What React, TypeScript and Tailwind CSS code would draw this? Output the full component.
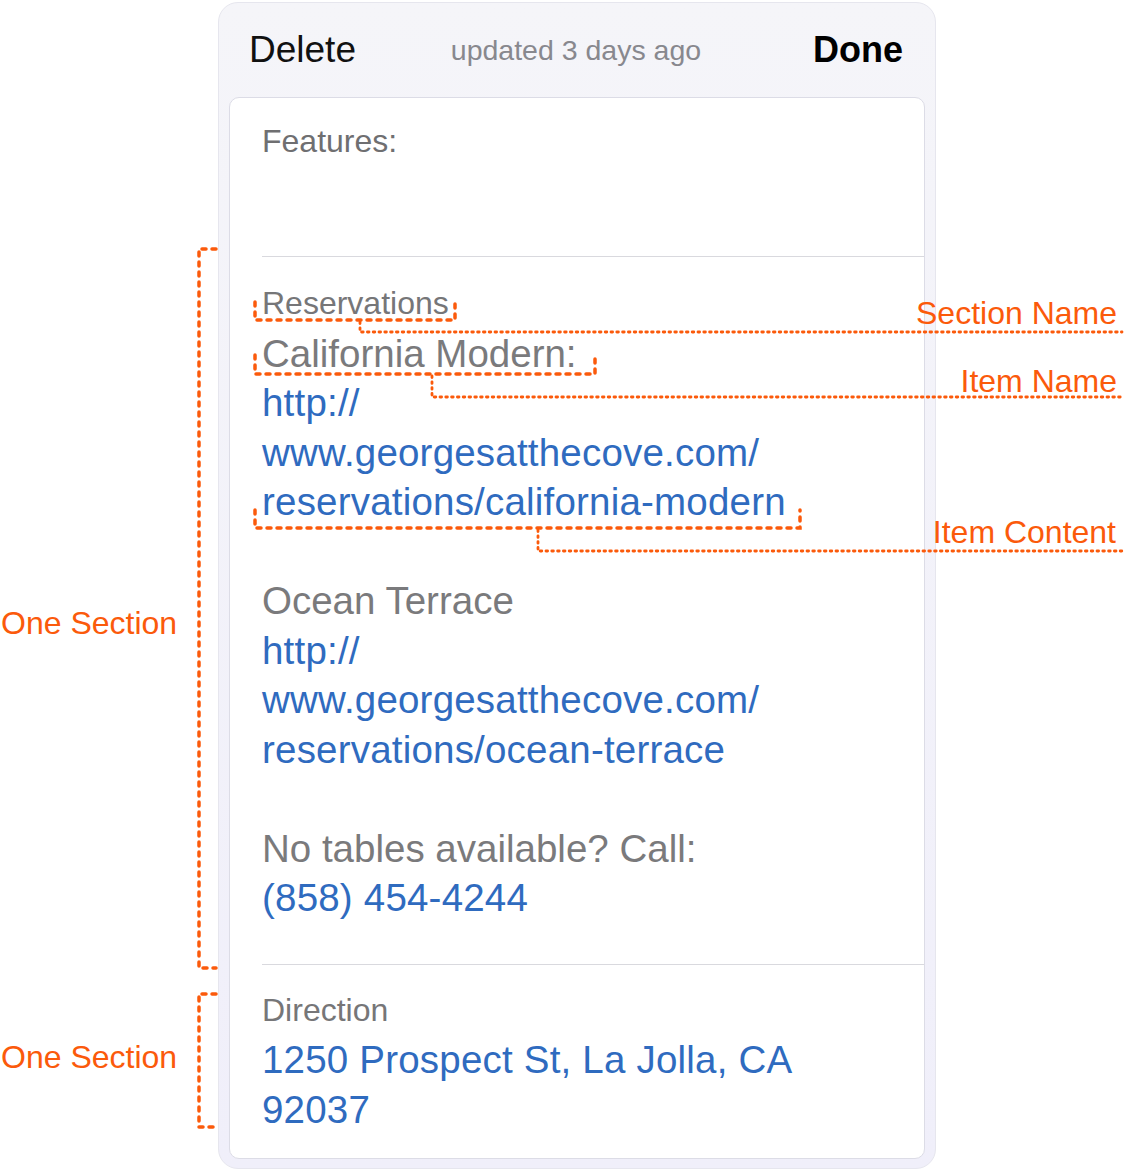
import React from "react";

const ORANGE = "#fb5a0b";

type Line = { text: string; kind: "section" | "name" | "link" | "gap" };

const reservations: Line[] = [
  { text: "Reservations", kind: "section" },
  { text: "California Modern:", kind: "name" },
  { text: "http://", kind: "link" },
  { text: "www.georgesatthecove.com/", kind: "link" },
  { text: "reservations/california-modern", kind: "link" },
  { text: "", kind: "gap" },
  { text: "Ocean Terrace", kind: "name" },
  { text: "http://", kind: "link" },
  { text: "www.georgesatthecove.com/", kind: "link" },
  { text: "reservations/ocean-terrace", kind: "link" },
  { text: "", kind: "gap" },
  { text: "No tables available? Call:", kind: "name" },
  { text: "(858) 454-4244", kind: "link" },
];

const direction: Line[] = [
  { text: "Direction", kind: "section" },
  { text: "1250 Prospect St, La Jolla, CA", kind: "link" },
  { text: "92037", kind: "link" },
];

function Row({ line }: { line: Line }) {
  if (line.kind === "gap") return <div className="h-[49.5px]" />;
  if (line.kind === "section")
    return <div className="h-[49.5px] leading-[49.5px] text-[32px] text-[#767678]">{line.text}</div>;
  if (line.kind === "name")
    return <div className="h-[49.5px] leading-[49.5px] text-[38.5px] text-[#7a7a7c]">{line.text}</div>;
  return (
    <div className="h-[49.5px] leading-[49.5px] text-[38.5px] tracking-[0.2px] text-[#2f6bbf]">{line.text}</div>
  );
}

// dotted markup drawn over the screenshot
function Annotations() {
  const box = { stroke: ORANGE, strokeWidth: 3.5, strokeDasharray: "4 6", strokeLinecap: "round" as const, fill: "none" };
  const fine = { stroke: ORANGE, strokeWidth: 2.8, strokeDasharray: "1.6 4.2", strokeLinecap: "round" as const, fill: "none" };
  return (
    <svg className="absolute inset-0 pointer-events-none" width="1126" height="1173" viewBox="0 0 1126 1173">
      {/* section brackets */}
      <path d="M216 249 H199 V968 H216" {...box} />
      <path d="M216 994 H199 V1127 H216" {...box} />
      {/* section name */}
      <path d="M255 302 V320 H455 V302" {...box} />
      <path d="M360 322 V332 H1122" {...fine} />
      {/* item name */}
      <path d="M255 355 V374 H595 V354" {...box} />
      <path d="M432 376 V397 H1122" {...fine} />
      {/* item content */}
      <path d="M255 510 V528 H800 V510" {...box} />
      <path d="M538 530 V551 H1122" {...fine} />
    </svg>
  );
}

export default function App() {
  return (
    <div className="relative w-[1126px] h-[1173px] bg-white overflow-hidden font-['Liberation_Sans',Arial,sans-serif]">
      <div className="ml-[218px] mt-[2px] w-[718px] rounded-[20px] border border-[#e6e6ee] bg-gradient-to-b from-[#f5f5f9] to-[#f0effa] pb-[9px]">
        <header className="h-[94px] grid grid-cols-[1fr_auto_1fr] items-center pl-[30px] pr-[32px]">
          <span className="text-[37px] text-[#111]">Delete</span>
          <span className="text-[28.5px] text-[#88888e]">updated 3 days ago</span>
          <span className="justify-self-end text-[36px] font-bold text-black">Done</span>
        </header>

        <div className="mx-[10px] bg-white rounded-[10px] border border-[#dcdce6]">
          <section className="pl-[32px] pt-[19px] pb-[40px]">
            <div className="h-[49.5px] leading-[49.5px] text-[32px] text-[#6f6f71]">Features:</div>
            <div className="h-[49.5px]" />
          </section>
          <div className="ml-[32px] border-t border-[#d9d9de]" />
          <section className="pl-[32px] pt-[22px] pb-[41px]">
            {reservations.map((l, i) => (
              <Row key={i} line={l} />
            ))}
          </section>
          <div className="ml-[32px] border-t border-[#d9d9de]" />
          <section className="pl-[32px] pt-[21px] pb-[24px]">
            {direction.map((l, i) => (
              <Row key={i} line={l} />
            ))}
          </section>
        </div>
      </div>

      <Annotations />

      <span className="absolute left-[1px] top-[607px] text-[32px] leading-none text-[#fb5a0b]">One Section</span>
      <span className="absolute left-[1px] top-[1041px] text-[32px] leading-none text-[#fb5a0b]">One Section</span>
      <span className="absolute right-[9px] top-[297px] text-[32px] leading-none text-[#fb5a0b]">Section Name</span>
      <span className="absolute right-[9px] top-[365px] text-[32px] leading-none text-[#fb5a0b]">Item Name</span>
      <span className="absolute right-[10px] top-[516px] text-[32px] leading-none text-[#fb5a0b]">Item Content</span>
    </div>
  );
}
